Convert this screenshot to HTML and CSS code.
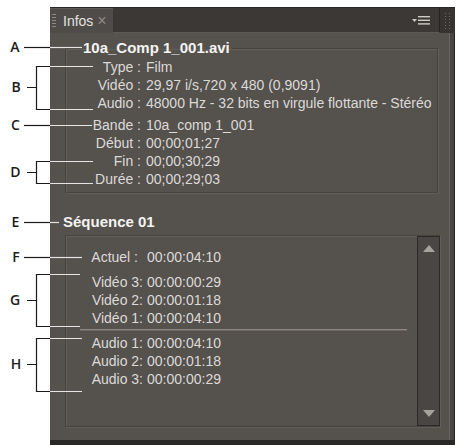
FILE: index.html
```html
<!DOCTYPE html>
<html lang="fr">
<head>
<meta charset="utf-8">
<title>Infos</title>
<link rel="stylesheet" href="styles.css">
</head>
<body>
<div class="stage">
  <div class="panel">
    <div class="tabbar">
      <div class="tab">
        <svg class="grip" width="4" height="14" viewBox="0 0 4 14">
          <rect x="0" y="0" width="4" height="1"/><rect x="0" y="3" width="4" height="1"/>
          <rect x="0" y="6" width="4" height="1"/><rect x="0" y="9" width="4" height="1"/>
          <rect x="0" y="12" width="4" height="1"/>
        </svg>
        <span class="tab-title">Infos</span>
        <span class="tab-close">×</span>
      </div>
      <div class="tabfill">
        <svg class="menu" width="18" height="11" viewBox="0 0 18 11">
          <path d="M0 4 L5 4 L2.5 7 Z"/>
          <rect x="6" y="1" width="12" height="1.4"/>
          <rect x="6" y="4.6" width="12" height="1.4"/>
          <rect x="6" y="8.2" width="12" height="1.4"/>
        </svg>
      </div>
      <div class="sidegrip">
        <svg width="6" height="16" viewBox="0 0 6 16">
          <g>
            <rect x="0" y="0" width="1" height="1"/><rect x="0" y="3" width="1" height="1"/><rect x="0" y="6" width="1" height="1"/><rect x="0" y="9" width="1" height="1"/><rect x="0" y="12" width="1" height="1"/><rect x="0" y="15" width="1" height="1"/>
            <rect x="4" y="0" width="1" height="1"/><rect x="4" y="3" width="1" height="1"/><rect x="4" y="6" width="1" height="1"/><rect x="4" y="9" width="1" height="1"/><rect x="4" y="12" width="1" height="1"/><rect x="4" y="15" width="1" height="1"/>
          </g>
        </svg>
      </div>
    </div>
    <div class="body">
      <div class="content">
        <fieldset class="box box-file">
          <legend class="legend">10a_Comp 1_001.avi</legend>
          <div class="rows rows-file">
            <span class="k">Type :</span><span class="v">Film</span>
            <span class="k">Vidéo :</span><span class="v">29,97 i/s,720 x 480 (0,9091)</span>
            <span class="k">Audio :</span><span class="v">48000 Hz - 32 bits en virgule flottante - Stéréo</span>
          </div>
          <div class="rows rows-file rows-gap">
            <span class="k">Bande :</span><span class="v">10a_comp 1_001</span>
            <span class="k">Début :</span><span class="v">00;00;01;27</span>
            <span class="k">Fin :</span><span class="v">00;00;30;29</span>
            <span class="k">Durée :</span><span class="v">00;00;29;03</span>
          </div>
        </fieldset>
        <h2 class="seq-title">Séquence 01</h2>
        <div class="box box-seq">
          <div class="seq-main">
            <div class="rows rows-seq">
              <span class="k k-actuel">Actuel :</span><span class="v">00:00:04:10</span>
            </div>
            <div class="rows rows-seq rows-video">
              <span class="k">Vidéo 3:</span><span class="v">00:00:00:29</span>
              <span class="k">Vidéo 2:</span><span class="v">00:00:01:18</span>
              <span class="k">Vidéo 1:</span><span class="v">00:00:04:10</span>
            </div>
            <div class="sep"></div>
            <div class="rows rows-seq">
              <span class="k">Audio 1:</span><span class="v">00:00:04:10</span>
              <span class="k">Audio 2:</span><span class="v">00:00:01:18</span>
              <span class="k">Audio 3:</span><span class="v">00:00:00:29</span>
            </div>
          </div>
          <div class="scrollbar">
            <svg class="arrow" width="12" height="7" viewBox="0 0 12 7"><path d="M0 7 L6 0 L12 7 Z"/></svg>
            <svg class="arrow" width="12" height="7" viewBox="0 0 12 7"><path d="M0 0 L12 0 L6 7 Z"/></svg>
          </div>
        </div>
      </div>
      <div class="rightstrip"></div>
    </div>
  </div>

  <svg class="callouts" width="459" height="445" viewBox="0 0 459 445">
    <g class="letters">
      <text x="15" y="52">A</text>
      <text x="16" y="92">B</text>
      <text x="15.5" y="130">C</text>
      <text x="15.5" y="177">D</text>
      <text x="15.5" y="227">E</text>
      <text x="16" y="262">F</text>
      <text x="15" y="305">G</text>
      <text x="16" y="369">H</text>
    </g>
    <g class="ln-dark">
      <path d="M24 47.5 H50"/>
      <path d="M27 87.5 H36.5 M36.5 66 V110 M36 66.5 H50 M36 109.5 H50"/>
      <path d="M24 125.5 H50"/>
      <path d="M27 172.5 H36.5 M36.5 161 V184 M36 161.5 H50 M36 183.5 H50"/>
      <path d="M24 222.5 H50"/>
      <path d="M24 257.5 H50"/>
      <path d="M27 300.5 H36.5 M36.5 274 V327 M36 274.5 H50 M36 326.5 H50"/>
      <path d="M27 364.5 H36.5 M36.5 338 V392 M36 338.5 H50 M36 391.5 H50"/>
    </g>
    <g class="ln-light">
      <path d="M50 47.5 H82"/>
      <path d="M50 66.5 H93 M50 109.5 H93"/>
      <path d="M50 125.5 H92"/>
      <path d="M50 161.5 H93 M50 183.5 H93"/>
      <path d="M50 222.5 H59"/>
      <path d="M50 257.5 H82"/>
      <path d="M50 274.5 H80 M50 326.5 H80"/>
      <path d="M50 338.5 H82 M50 391.5 H82"/>
    </g>
  </svg>
</div>
</body>
</html>
```

FILE: styles.css
```css
* { box-sizing: border-box; }

html, body {
  margin: 0;
  padding: 0;
  background: #ffffff;
}

body {
  font-family: "Liberation Sans", Arial, sans-serif;
  font-size: 14px;
  color: #dcdad8;
}

.stage {
  position: relative;
  width: 459px;
  height: 445px;
  overflow: hidden;
}

.panel {
  margin: 7px 0 0 50px;
  width: 405px;
  height: 438px;
  display: flex;
  flex-direction: column;
  background: #2a2826;
  padding-bottom: 5px;
}

/* ---------- tab bar ---------- */
.tabbar {
  height: 26px;
  display: flex;
  padding-top: 1px;
  background: #2a2826;
}

.tab {
  width: 63px;
  display: flex;
  align-items: center;
  padding-left: 2px;
  background: #4f4b48;
  border-top: 1px solid #5e5a56;
}

.grip {
  fill: #8d8883;
  margin-right: 7px;
}

.tab-title {
  color: #e4e2e0;
  line-height: 16px;
}

.tab-close {
  color: #8d8883;
  margin-left: 4px;
  font-size: 16px;
  line-height: 16px;
}

.tabfill {
  flex: 1;
  display: flex;
  align-items: center;
  justify-content: flex-end;
  padding-right: 9px;
  background: #3b3836;
  border-bottom: 1px solid #5c5854;
  border-right: 1px solid #252321;
}

.menu {
  fill: #cfcbc7;
}

.sidegrip {
  width: 15px;
  display: flex;
  justify-content: center;
  padding-top: 5px;
  background: #363331;
}

.sidegrip svg {
  fill: #6f6b67;
}

/* ---------- body ---------- */
.body {
  flex: 1;
  display: flex;
}

.content {
  flex: 1;
  display: flex;
  flex-direction: column;
  background: #55514d;
  padding: 6px 9px 13px 15px;
}

.rightstrip {
  width: 6px;
  background: #4a4643;
  border-left: 1px solid #6c6762;
  border-right: 1px solid #262422;
}

/* ---------- boxes ---------- */
.box {
  border: 1px solid #46423f;
  box-shadow: 1px 1px 0 #625e5a, inset 1px 1px 0 #625e5a;
}

.box-file {
  margin: 0 2px 0 0;
  padding: 1px 0 4px 0;
  min-width: 0;
}

.legend {
  margin-left: 15px;
  padding: 0 2px;
  font-size: 15px;
  font-weight: bold;
  line-height: 18px;
  color: #f4f3f2;
}

.rows {
  display: grid;
  line-height: 18px;
  white-space: nowrap;
}

.rows-file {
  grid-template-columns: 75px auto;
  column-gap: 5px;
}

.rows-gap {
  margin-top: 4px;
}

.k {
  text-align: right;
}

.seq-title {
  margin: 20px 0 4px -2px;
  font-size: 15px;
  font-weight: bold;
  line-height: 18px;
  color: #f4f3f2;
}

.box-seq {
  flex: 1;
  display: flex;
  border-right: none;
}

.seq-main {
  flex: 1;
  padding-top: 12px;
}

.rows-seq {
  grid-template-columns: 77px auto;
  column-gap: 4px;
}

.k-actuel {
  padding-right: 5px;
}

.rows-video {
  margin-top: 7px;
}

.sep {
  height: 2px;
  margin: 2px 10px 3px 14px;
  background: #8e8985;
  border-bottom: 1px solid #6a6561;
}

.scrollbar {
  width: 23px;
  display: flex;
  flex-direction: column;
  justify-content: space-between;
  align-items: center;
  padding: 8px 0 8px 0;
  background: #4a4643;
  border: 1px solid #2c2a28;
}

.arrow {
  fill: #a6a29e;
}

/* ---------- callouts ---------- */
.callouts {
  position: absolute;
  left: 0;
  top: 0;
  pointer-events: none;
}

.letters text {
  font-family: "Open Sans", "Liberation Sans", sans-serif;
  font-size: 14px;
  font-weight: 600;
  fill: #1c1c1c;
  text-anchor: middle;
}

.ln-dark path {
  stroke: #1a1a1a;
  stroke-width: 1.2;
  fill: none;
}

.ln-light path {
  stroke: #e4e4e4;
  stroke-width: 1.2;
  fill: none;
}
```
